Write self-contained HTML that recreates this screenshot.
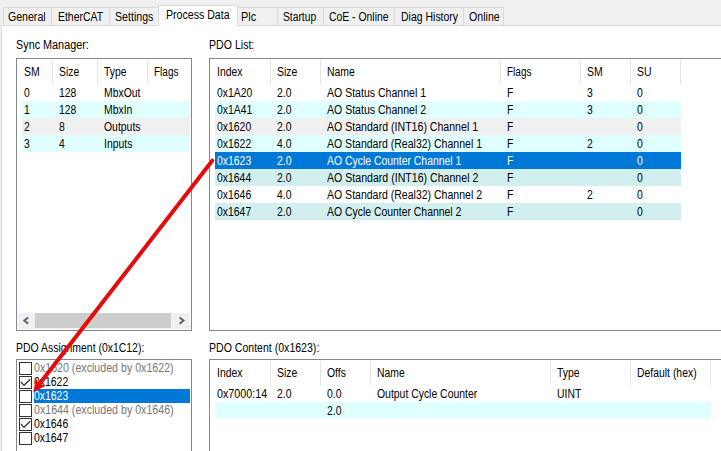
<!DOCTYPE html>
<html><head><meta charset="utf-8"><title>Process Data</title>
<style>
html,body{margin:0;padding:0;}
body{width:721px;height:451px;overflow:hidden;background:#f0f0f0;position:relative;font-family:"Liberation Sans",sans-serif;font-size:12.5px;}
#r{position:absolute;left:0;top:0;width:721px;height:451px;overflow:hidden;}
#r div,#r svg{position:absolute;}
.t{position:absolute;white-space:nowrap;line-height:16px;height:16px;transform-origin:0 50%;display:block;}
</style></head><body><div id="r">
<div style="left:1px;top:25px;width:730px;height:440px;background:#fff;border:1px solid #dadada;box-sizing:border-box;"></div>
<div style="left:3px;top:7px;width:49px;height:19px;background:#f0f0f0;border:1px solid #d9d9d9;box-sizing:border-box;"></div>
<span class="t" style="left:8.0px;top:9px;color:#000;transform:scaleX(0.8456);">General</span>
<div style="left:51px;top:7px;width:59px;height:19px;background:#f0f0f0;border:1px solid #d9d9d9;box-sizing:border-box;"></div>
<span class="t" style="left:57.6px;top:9px;color:#000;transform:scaleX(0.8360);">EtherCAT</span>
<div style="left:109px;top:7px;width:50px;height:19px;background:#f0f0f0;border:1px solid #d9d9d9;box-sizing:border-box;"></div>
<span class="t" style="left:115.0px;top:9px;color:#000;transform:scaleX(0.8502);">Settings</span>
<div style="left:237px;top:7px;width:41px;height:19px;background:#f0f0f0;border:1px solid #d9d9d9;box-sizing:border-box;"></div>
<span class="t" style="left:241.3px;top:9px;color:#000;transform:scaleX(0.8696);">Plc</span>
<div style="left:277px;top:7px;width:47px;height:19px;background:#f0f0f0;border:1px solid #d9d9d9;box-sizing:border-box;"></div>
<span class="t" style="left:283.3px;top:9px;color:#000;transform:scaleX(0.8213);">Startup</span>
<div style="left:323px;top:7px;width:72px;height:19px;background:#f0f0f0;border:1px solid #d9d9d9;box-sizing:border-box;"></div>
<span class="t" style="left:328.5px;top:9px;color:#000;transform:scaleX(0.8315);">CoE - Online</span>
<div style="left:394px;top:7px;width:70px;height:19px;background:#f0f0f0;border:1px solid #d9d9d9;box-sizing:border-box;"></div>
<span class="t" style="left:400.6px;top:9px;color:#000;transform:scaleX(0.8388);">Diag History</span>
<div style="left:463px;top:7px;width:41px;height:19px;background:#f0f0f0;border:1px solid #d9d9d9;box-sizing:border-box;"></div>
<span class="t" style="left:469.0px;top:9px;color:#000;transform:scaleX(0.8497);">Online</span>
<div style="left:158px;top:5px;width:80px;height:21px;background:#fff;border:1px solid #d9d9d9;border-bottom:none;box-sizing:border-box;"></div>
<span class="t" style="left:165.5px;top:7px;color:#000;transform:scaleX(0.8477);">Process Data</span>
<span class="t" style="left:15.6px;top:37px;color:#000;transform:scaleX(0.8660);">Sync Manager:</span>
<span class="t" style="left:209.0px;top:37px;color:#000;transform:scaleX(0.8470);">PDO List:</span>
<span class="t" style="left:16.0px;top:340px;color:#000;transform:scaleX(0.8357);">PDO Assignment (0x1C12):</span>
<span class="t" style="left:209.0px;top:340px;color:#000;transform:scaleX(0.8445);">PDO Content (0x1623):</span>
<div style="left:16px;top:58px;width:176px;height:273px;background:#fff;border:1px solid #828790;box-sizing:border-box;"></div>
<span class="t" style="left:24.3px;top:64px;color:#000;transform:scaleX(0.8334);">SM</span>
<div style="left:52px;top:60px;width:1px;height:24px;background:#e5e5e5;"></div>
<span class="t" style="left:59.3px;top:64px;color:#000;transform:scaleX(0.8334);">Size</span>
<div style="left:97px;top:60px;width:1px;height:24px;background:#e5e5e5;"></div>
<span class="t" style="left:104.3px;top:64px;color:#000;transform:scaleX(0.8334);">Type</span>
<div style="left:147px;top:60px;width:1px;height:24px;background:#e5e5e5;"></div>
<span class="t" style="left:154.3px;top:64px;color:#000;transform:scaleX(0.8000);">Flags</span>
<span class="t" style="left:24.3px;top:85px;color:#000;transform:scaleX(0.8334);">0</span>
<span class="t" style="left:59.3px;top:85px;color:#000;transform:scaleX(0.8334);">128</span>
<span class="t" style="left:104.3px;top:85px;color:#000;transform:scaleX(0.8334);">MbxOut</span>
<div style="left:22px;top:101px;width:168px;height:17px;background:#e0ffff;"></div>
<span class="t" style="left:24.3px;top:102px;color:#000;transform:scaleX(0.8334);">1</span>
<span class="t" style="left:59.3px;top:102px;color:#000;transform:scaleX(0.8334);">128</span>
<span class="t" style="left:104.3px;top:102px;color:#000;transform:scaleX(0.8334);">MbxIn</span>
<div style="left:22px;top:118px;width:168px;height:17px;background:#f0f0f0;"></div>
<span class="t" style="left:24.3px;top:119px;color:#000;transform:scaleX(0.8334);">2</span>
<span class="t" style="left:59.3px;top:119px;color:#000;transform:scaleX(0.8334);">8</span>
<span class="t" style="left:104.3px;top:119px;color:#000;transform:scaleX(0.8334);">Outputs</span>
<div style="left:22px;top:135px;width:168px;height:17px;background:#e0ffff;"></div>
<span class="t" style="left:24.3px;top:136px;color:#000;transform:scaleX(0.8334);">3</span>
<span class="t" style="left:59.3px;top:136px;color:#000;transform:scaleX(0.8334);">4</span>
<span class="t" style="left:104.3px;top:136px;color:#000;transform:scaleX(0.8334);">Inputs</span>
<div style="left:18px;top:313px;width:172px;height:16px;background:#f0f0f0;"></div>
<div style="left:35px;top:313px;width:136px;height:15px;background:#cdcdcd;"></div>
<svg style="left:17px;top:313px" width="173" height="16" viewBox="0 0 173 16"><path d="M11.2 4.5 L7.3 7.6 L11.2 10.7" fill="none" stroke="#606060" stroke-width="1.9"/><path d="M162.6 4.5 L166.5 7.6 L162.6 10.7" fill="none" stroke="#606060" stroke-width="1.9"/></svg>
<div style="left:209px;top:58px;width:530px;height:273px;background:#fff;border:1px solid #828790;box-sizing:border-box;"></div>
<span class="t" style="left:217.3px;top:64px;color:#000;transform:scaleX(0.8334);">Index</span>
<div style="left:270px;top:60px;width:1px;height:24px;background:#e5e5e5;"></div>
<span class="t" style="left:277.3px;top:64px;color:#000;transform:scaleX(0.8334);">Size</span>
<div style="left:320px;top:60px;width:1px;height:24px;background:#e5e5e5;"></div>
<span class="t" style="left:327.3px;top:64px;color:#000;transform:scaleX(0.8334);">Name</span>
<div style="left:500px;top:60px;width:1px;height:24px;background:#e5e5e5;"></div>
<span class="t" style="left:507.3px;top:64px;color:#000;transform:scaleX(0.8000);">Flags</span>
<div style="left:580px;top:60px;width:1px;height:24px;background:#e5e5e5;"></div>
<span class="t" style="left:587.3px;top:64px;color:#000;transform:scaleX(0.8334);">SM</span>
<div style="left:630px;top:60px;width:1px;height:24px;background:#e5e5e5;"></div>
<span class="t" style="left:637.3px;top:64px;color:#000;transform:scaleX(0.8334);">SU</span>
<div style="left:680px;top:60px;width:1px;height:24px;background:#e5e5e5;"></div>
<span class="t" style="left:217.3px;top:85px;color:#000;transform:scaleX(0.8334);">0x1A20</span>
<span class="t" style="left:277.3px;top:85px;color:#000;transform:scaleX(0.8334);">2.0</span>
<span class="t" style="left:327.3px;top:85px;color:#000;transform:scaleX(0.8434);">AO Status Channel 1</span>
<span class="t" style="left:507.3px;top:85px;color:#000;transform:scaleX(0.8334);">F</span>
<span class="t" style="left:587.3px;top:85px;color:#000;transform:scaleX(0.8334);">3</span>
<span class="t" style="left:637.3px;top:85px;color:#000;transform:scaleX(0.8334);">0</span>
<div style="left:215px;top:101px;width:466px;height:17px;background:#e0ffff;"></div>
<span class="t" style="left:217.3px;top:102px;color:#000;transform:scaleX(0.8334);">0x1A41</span>
<span class="t" style="left:277.3px;top:102px;color:#000;transform:scaleX(0.8334);">2.0</span>
<span class="t" style="left:327.3px;top:102px;color:#000;transform:scaleX(0.8434);">AO Status Channel 2</span>
<span class="t" style="left:507.3px;top:102px;color:#000;transform:scaleX(0.8334);">F</span>
<span class="t" style="left:587.3px;top:102px;color:#000;transform:scaleX(0.8334);">3</span>
<span class="t" style="left:637.3px;top:102px;color:#000;transform:scaleX(0.8334);">0</span>
<div style="left:215px;top:118px;width:466px;height:17px;background:#f0f0f0;"></div>
<span class="t" style="left:217.3px;top:119px;color:#000;transform:scaleX(0.8334);">0x1620</span>
<span class="t" style="left:277.3px;top:119px;color:#000;transform:scaleX(0.8334);">2.0</span>
<span class="t" style="left:327.3px;top:119px;color:#000;transform:scaleX(0.8459);">AO Standard (INT16) Channel 1</span>
<span class="t" style="left:507.3px;top:119px;color:#000;transform:scaleX(0.8334);">F</span>
<span class="t" style="left:637.3px;top:119px;color:#000;transform:scaleX(0.8334);">0</span>
<div style="left:215px;top:135px;width:466px;height:17px;background:#e0ffff;"></div>
<span class="t" style="left:217.3px;top:136px;color:#000;transform:scaleX(0.8334);">0x1622</span>
<span class="t" style="left:277.3px;top:136px;color:#000;transform:scaleX(0.8334);">4.0</span>
<span class="t" style="left:327.3px;top:136px;color:#000;transform:scaleX(0.8417);">AO Standard (Real32) Channel 1</span>
<span class="t" style="left:507.3px;top:136px;color:#000;transform:scaleX(0.8334);">F</span>
<span class="t" style="left:587.3px;top:136px;color:#000;transform:scaleX(0.8334);">2</span>
<span class="t" style="left:637.3px;top:136px;color:#000;transform:scaleX(0.8334);">0</span>
<div style="left:215px;top:152px;width:466px;height:17px;background:#0078d7;"></div>
<span class="t" style="left:217.3px;top:153px;color:#fff;transform:scaleX(0.8334);">0x1623</span>
<span class="t" style="left:277.3px;top:153px;color:#fff;transform:scaleX(0.8334);">2.0</span>
<span class="t" style="left:327.3px;top:153px;color:#fff;transform:scaleX(0.8334);">AO Cycle Counter Channel 1</span>
<span class="t" style="left:507.3px;top:153px;color:#fff;transform:scaleX(0.8334);">F</span>
<span class="t" style="left:637.3px;top:153px;color:#fff;transform:scaleX(0.8334);">0</span>
<div style="left:215px;top:169px;width:466px;height:17px;background:#d2efef;"></div>
<span class="t" style="left:217.3px;top:170px;color:#000;transform:scaleX(0.8334);">0x1644</span>
<span class="t" style="left:277.3px;top:170px;color:#000;transform:scaleX(0.8334);">2.0</span>
<span class="t" style="left:327.3px;top:170px;color:#000;transform:scaleX(0.8475);">AO Standard (INT16) Channel 2</span>
<span class="t" style="left:507.3px;top:170px;color:#000;transform:scaleX(0.8334);">F</span>
<span class="t" style="left:637.3px;top:170px;color:#000;transform:scaleX(0.8334);">0</span>
<span class="t" style="left:217.3px;top:187px;color:#000;transform:scaleX(0.8334);">0x1646</span>
<span class="t" style="left:277.3px;top:187px;color:#000;transform:scaleX(0.8334);">4.0</span>
<span class="t" style="left:327.3px;top:187px;color:#000;transform:scaleX(0.8417);">AO Standard (Real32) Channel 2</span>
<span class="t" style="left:507.3px;top:187px;color:#000;transform:scaleX(0.8334);">F</span>
<span class="t" style="left:587.3px;top:187px;color:#000;transform:scaleX(0.8334);">2</span>
<span class="t" style="left:637.3px;top:187px;color:#000;transform:scaleX(0.8334);">0</span>
<div style="left:215px;top:203px;width:466px;height:17px;background:#d2efef;"></div>
<span class="t" style="left:217.3px;top:204px;color:#000;transform:scaleX(0.8334);">0x1647</span>
<span class="t" style="left:277.3px;top:204px;color:#000;transform:scaleX(0.8334);">2.0</span>
<span class="t" style="left:327.3px;top:204px;color:#000;transform:scaleX(0.8334);">AO Cycle Counter Channel 2</span>
<span class="t" style="left:507.3px;top:204px;color:#000;transform:scaleX(0.8334);">F</span>
<span class="t" style="left:637.3px;top:204px;color:#000;transform:scaleX(0.8334);">0</span>
<div style="left:209px;top:359px;width:530px;height:120px;background:#fff;border:1px solid #828790;box-sizing:border-box;"></div>
<span class="t" style="left:217.3px;top:365px;color:#000;transform:scaleX(0.8334);">Index</span>
<div style="left:270px;top:361px;width:1px;height:24px;background:#e5e5e5;"></div>
<span class="t" style="left:277.3px;top:365px;color:#000;transform:scaleX(0.8334);">Size</span>
<div style="left:320px;top:361px;width:1px;height:24px;background:#e5e5e5;"></div>
<span class="t" style="left:327.3px;top:365px;color:#000;transform:scaleX(0.8334);">Offs</span>
<div style="left:370px;top:361px;width:1px;height:24px;background:#e5e5e5;"></div>
<span class="t" style="left:377.3px;top:365px;color:#000;transform:scaleX(0.8334);">Name</span>
<div style="left:550px;top:361px;width:1px;height:24px;background:#e5e5e5;"></div>
<span class="t" style="left:557.3px;top:365px;color:#000;transform:scaleX(0.8334);">Type</span>
<div style="left:630px;top:361px;width:1px;height:24px;background:#e5e5e5;"></div>
<span class="t" style="left:637.3px;top:365px;color:#000;transform:scaleX(0.8334);">Default (hex)</span>
<div style="left:710px;top:361px;width:1px;height:24px;background:#e5e5e5;"></div>
<span class="t" style="left:217.3px;top:386px;color:#000;transform:scaleX(0.8584);">0x7000:14</span>
<span class="t" style="left:277.3px;top:386px;color:#000;transform:scaleX(0.8334);">2.0</span>
<span class="t" style="left:327.3px;top:386px;color:#000;transform:scaleX(0.8334);">0.0</span>
<span class="t" style="left:377.3px;top:386px;color:#000;transform:scaleX(0.8334);">Output Cycle Counter</span>
<span class="t" style="left:557.3px;top:386px;color:#000;transform:scaleX(0.8334);">UINT</span>
<div style="left:215px;top:402px;width:496px;height:17px;background:#e0ffff;"></div>
<span class="t" style="left:327.3px;top:403px;color:#000;transform:scaleX(0.8334);">2.0</span>
<div style="left:16px;top:359px;width:176px;height:120px;background:#fff;border:1px solid #828790;box-sizing:border-box;"></div>
<div style="left:19px;top:362px;width:13px;height:13px;background:#fff;border:1px solid #333;box-sizing:border-box;"></div>
<span class="t" style="left:34.0px;top:360px;color:#777;transform:scaleX(0.8513);">0x1620 (excluded by 0x1622)</span>
<div style="left:19px;top:376px;width:13px;height:13px;background:#fff;border:1px solid #333;box-sizing:border-box;"></div>
<svg style="left:19px;top:376px" width="13" height="13" viewBox="0 0 13 13"><path d="M2 6 L5 9.3 L11.3 3.3" fill="none" stroke="#333" stroke-width="1.2"/></svg>
<span class="t" style="left:34.0px;top:374px;color:#000;transform:scaleX(0.8334);">0x1622</span>
<div style="left:34px;top:389px;width:156px;height:14px;background:#0078d7;"></div>
<div style="left:19px;top:390px;width:13px;height:13px;background:#fff;border:1px solid #333;box-sizing:border-box;"></div>
<span class="t" style="left:34.0px;top:388px;color:#fff;transform:scaleX(0.8334);">0x1623</span>
<div style="left:19px;top:404px;width:13px;height:13px;background:#fff;border:1px solid #333;box-sizing:border-box;"></div>
<span class="t" style="left:34.0px;top:402px;color:#777;transform:scaleX(0.8513);">0x1644 (excluded by 0x1646)</span>
<div style="left:19px;top:418px;width:13px;height:13px;background:#fff;border:1px solid #333;box-sizing:border-box;"></div>
<svg style="left:19px;top:418px" width="13" height="13" viewBox="0 0 13 13"><path d="M2 6 L5 9.3 L11.3 3.3" fill="none" stroke="#333" stroke-width="1.2"/></svg>
<span class="t" style="left:34.0px;top:416px;color:#000;transform:scaleX(0.8334);">0x1646</span>
<div style="left:19px;top:432px;width:13px;height:13px;background:#fff;border:1px solid #333;box-sizing:border-box;"></div>
<span class="t" style="left:34.0px;top:430px;color:#000;transform:scaleX(0.8334);">0x1647</span>
<svg style="left:0;top:0" width="721" height="451" viewBox="0 0 721 451"><path d="M212.2 160.7 L38.20 385.57" stroke="#e60a0a" stroke-width="4" stroke-linecap="round" fill="none"/><path d="M33.30,391.90 L45.93,385.87 L39.11,384.39 L35.97,378.16 Z" fill="#e60a0a"/></svg>
</div></body></html>
